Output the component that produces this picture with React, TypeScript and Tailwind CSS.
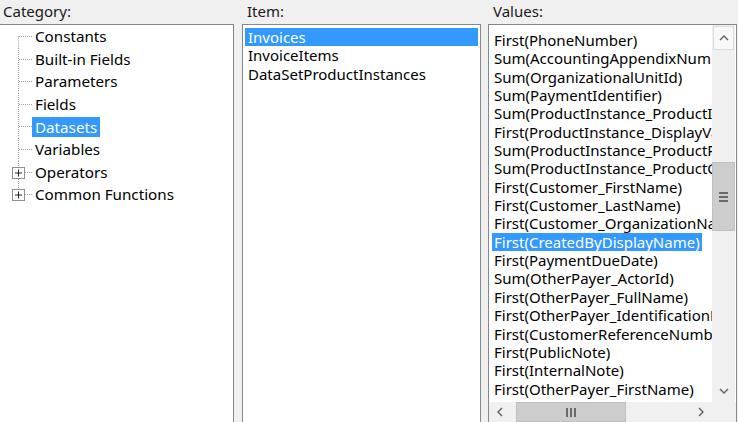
import React from 'react'

const CATEGORIES = [
  { label: 'Constants' },
  { label: 'Built-in Fields' },
  { label: 'Parameters' },
  { label: 'Fields' },
  { label: 'Datasets', selected: true },
  { label: 'Variables' },
  { label: 'Operators', expandable: true },
  { label: 'Common Functions', expandable: true },
]

const ITEMS = ['Invoices', 'InvoiceItems', 'DataSetProductInstances']

const VALUES = [
  'First(PhoneNumber)',
  'Sum(AccountingAppendixNumber)',
  'Sum(OrganizationalUnitId)',
  'Sum(PaymentIdentifier)',
  'Sum(ProductInstance_ProductId)',
  'First(ProductInstance_DisplayValue)',
  'Sum(ProductInstance_ProductPrice)',
  'Sum(ProductInstance_ProductCount)',
  'First(Customer_FirstName)',
  'First(Customer_LastName)',
  'First(Customer_OrganizationName)',
  'First(CreatedByDisplayName)',
  'First(PaymentDueDate)',
  'Sum(OtherPayer_ActorId)',
  'First(OtherPayer_FullName)',
  'First(OtherPayer_IdentificationNumber)',
  'First(CustomerReferenceNumber)',
  'First(PublicNote)',
  'First(InternalNote)',
  'First(OtherPayer_FirstName)',
  'First(OtherPayer_LastName)',
]

const SELECTED_VALUE = 11

function TreeLines({ first, last, expandable }: { first: boolean; last: boolean; expandable?: boolean }) {
  return (
    <svg width="31" height="22.6" className="shrink-0 block">
      <line
        x1="17.5"
        x2="17.5"
        y1={first ? 11.3 : 0}
        y2={last ? 11.3 : 22.6}
        stroke="#a0a0a0"
        strokeDasharray="1 1"
      />
      <line x1="18" x2="31" y1="11.5" y2="11.5" stroke="#a0a0a0" strokeDasharray="1 1" />
      {expandable ? (
        <g>
          <rect x="11.5" y="6.5" width="12" height="11" fill="#fff" stroke="#919191" />
          <line x1="14" x2="21" y1="12" y2="12" stroke="#222" />
          <line x1="17.5" x2="17.5" y1="8.5" y2="15.5" stroke="#222" />
        </g>
      ) : null}
    </svg>
  )
}

function Chevron({ dir }: { dir: 'up' | 'down' | 'left' | 'right' }) {
  const d = {
    up: 'M1 6 L5 2 L9 6',
    down: 'M1 2 L5 6 L9 2',
    left: 'M6 1 L2 5 L6 9',
    right: 'M2 1 L6 5 L2 9',
  }[dir]
  const w = dir === 'up' || dir === 'down' ? 10 : 8
  const h = dir === 'up' || dir === 'down' ? 8 : 10
  return (
    <svg width={w} height={h} viewBox={`0 0 ${w} ${h}`}>
      <path d={d} fill="none" stroke="#606060" strokeWidth="1.4" />
    </svg>
  )
}

export default function App() {
  return (
    <div className="w-[738px] h-[422px] overflow-hidden bg-[#f0f0f0] font-['Noto_Sans','Liberation_Sans',sans-serif] text-black flex">
      {/* Category */}
      <div className="w-[234px] shrink-0 flex flex-col">
        <div className="h-[24px] pl-[3px] text-[15px] leading-[23px] text-[#1a1a1a]">Category:</div>
        <div className="flex-1 ml-[-2px] bg-white border border-[#828790] border-b-0">
          {CATEGORIES.map((c, i) => (
            <div key={c.label} className="h-[22.6px] flex items-center pl-[2px]">
              <TreeLines first={i === 0} last={i === CATEGORIES.length - 1} expandable={c.expandable} />
              <span
                className={`px-[3px] text-[15.2px] leading-[20px] whitespace-nowrap ${
                  c.selected ? 'bg-[#3399ff] text-white' : ''
                }`}
              >
                {c.label}
              </span>
            </div>
          ))}
        </div>
      </div>

      {/* Item */}
      <div className="w-[239px] shrink-0 ml-[8px] flex flex-col">
        <div className="h-[24px] pl-[5px] text-[15px] leading-[23px] text-[#1a1a1a]">Item:</div>
        <div className="flex-1 bg-white border border-[#828790] border-b-0 pt-[3px] px-[2px]">
          {ITEMS.map((item, i) => (
            <div
              key={item}
              className={`h-[18.4px] pl-[3px] text-[15px] leading-[18.4px] whitespace-nowrap ${
                i === 0 ? 'bg-[#3399ff] text-white' : ''
              }`}
            >
              {item}
            </div>
          ))}
        </div>
      </div>

      {/* Values */}
      <div className="w-[249px] shrink-0 ml-[7px] flex flex-col">
        <div className="h-[24px] pl-[5px] text-[15px] leading-[23px] text-[#1a1a1a]">Values:</div>
        <div className="flex-1 bg-white border border-[#828790] border-b-0 flex flex-col min-h-0">
          <div className="flex-1 flex min-h-0">
            <div className="flex-1 overflow-hidden pt-[3px] pl-[3px]">
              {VALUES.map((v, i) => (
                <div key={v} className="h-[18.35px] whitespace-nowrap">
                  <span
                    className={`inline-block px-[2px] text-[15px] leading-[18.35px] ${
                      i === SELECTED_VALUE ? 'bg-[#3399ff] text-white' : ''
                    }`}
                  >
                    {v}
                  </span>
                </div>
              ))}
            </div>
            {/* vertical scrollbar */}
            <div className="w-[23px] shrink-0 bg-[#f0f0f0] flex flex-col mr-[1px]">
              <div className="h-[24px] m-[1px] border border-[#dcdcdc] bg-[#f8f8f8] flex items-center justify-center">
                <Chevron dir="up" />
              </div>
              <div className="h-[111px]" />
              <div className="h-[69px] bg-[#cdcdcd] border border-[#c0c0c0] flex flex-col items-center justify-center gap-[2px]">
                <div className="w-[9px] h-[2px] bg-[#6a6a6a]" />
                <div className="w-[9px] h-[2px] bg-[#6a6a6a]" />
                <div className="w-[9px] h-[2px] bg-[#6a6a6a]" />
              </div>
              <div className="flex-1" />
              <div className="h-[22px] flex items-center justify-center">
                <Chevron dir="down" />
              </div>
            </div>
          </div>
          {/* horizontal scrollbar */}
          <div className="h-[20px] shrink-0 flex bg-[#f0f0f0]">
            <div className="w-[22px] flex items-center justify-center">
              <Chevron dir="left" />
            </div>
            <div className="w-[5px]" />
            <div className="w-[110px] bg-[#cdcdcd] border border-[#c0c0c0] flex items-center justify-center gap-[2px]">
              <div className="w-[2px] h-[9px] bg-[#6a6a6a]" />
              <div className="w-[2px] h-[9px] bg-[#6a6a6a]" />
              <div className="w-[2px] h-[9px] bg-[#6a6a6a]" />
            </div>
            <div className="flex-1" />
            <div className="w-[22px] flex items-center justify-center">
              <Chevron dir="right" />
            </div>
            <div className="w-[24px] bg-[#f0f0f0]" />
          </div>
        </div>
      </div>
    </div>
  )
}
